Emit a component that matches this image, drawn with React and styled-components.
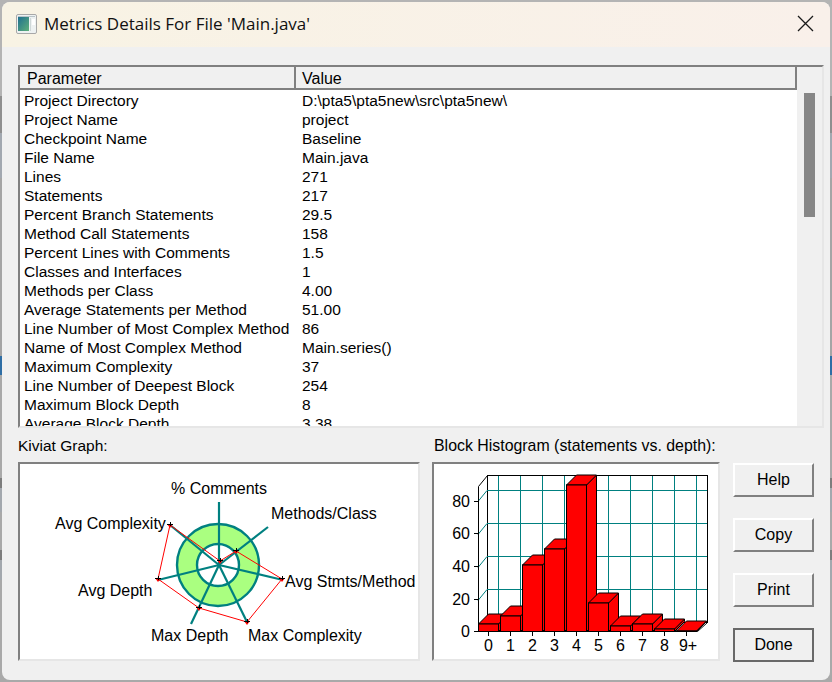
import styled, { createGlobalStyle } from "styled-components";

const rows = [
  ["Project Directory", "D:\\pta5\\pta5new\\src\\pta5new\\"],
  ["Project Name", "project"],
  ["Checkpoint Name", "Baseline"],
  ["File Name", "Main.java"],
  ["Lines", "271"],
  ["Statements", "217"],
  ["Percent Branch Statements", "29.5"],
  ["Method Call Statements", "158"],
  ["Percent Lines with Comments", "1.5"],
  ["Classes and Interfaces", "1"],
  ["Methods per Class", "4.00"],
  ["Average Statements per Method", "51.00"],
  ["Line Number of Most Complex Method", "86"],
  ["Name of Most Complex Method", "Main.series()"],
  ["Maximum Complexity", "37"],
  ["Line Number of Deepest Block", "254"],
  ["Maximum Block Depth", "8"],
  ["Average Block Depth", "3.38"],
];

const center = [219, 565];
const spokes = [
  [219, 502],
  [268, 527],
  [283, 580],
  [247, 622],
  [191, 624],
  [158, 580],
  [170, 525],
];
const kiviatPoints = [
  [220, 561],
  [236, 551],
  [282, 579],
  [247, 622],
  [199, 608],
  [158, 579],
  [170, 525],
];
const kiviatLabels = [
  ["% Comments", 171, 494],
  ["Methods/Class", 271, 519],
  ["Avg Complexity", 55, 529],
  ["Avg Stmts/Method", 285, 587],
  ["Avg Depth", 78, 596],
  ["Max Depth", 151, 641],
  ["Max Complexity", 248, 641],
];

const bars = [624, 616, 565, 549, 485, 603, 626, 624, 629, 631];
const barLabels = ["0", "1", "2", "3", "4", "5", "6", "7", "8", "9+"];
const yTicks = [
  ["80", 501],
  ["60", 533],
  ["40", 566],
  ["20", 599],
  ["0", 631],
];
const backLines = [490, 523, 556, 589];

function KiviatGraph() {
  return (
    <ChartSvg viewBox="20 464 398 195">
      <circle cx="218" cy="565" r="41" fill="#aaff80" stroke="#008080" strokeWidth="2.4" />
      <circle cx="218" cy="565" r="21" fill="#fff" stroke="#008080" strokeWidth="2.4" />
      {spokes.map(([x, y], i) => (
        <line key={i} x1={center[0]} y1={center[1]} x2={x} y2={y} stroke="#008080" strokeWidth="2.2" />
      ))}
      <polygon
        points={kiviatPoints.map((p) => p.join(",")).join(" ")}
        fill="none"
        stroke="#ff0000"
        strokeWidth="1"
      />
      {kiviatPoints.map(([x, y], i) => (
        <g key={i}>
          <polygon points={`${x - 3},${y - 1} ${x + 3},${y - 1} ${x},${y + 3}`} fill="#ff0000" />
          <path d={`M${x - 3} ${y - 0.5}H${x + 3}M${x + 0.5} ${y - 3}V${y + 1}`} stroke="#000" strokeWidth="1" />
        </g>
      ))}
      {kiviatLabels.map(([text, x, y]) => (
        <ChartText key={text} x={x} y={y}>
          {text}
        </ChartText>
      ))}
    </ChartSvg>
  );
}

function BlockHistogram() {
  return (
    <ChartSvg viewBox="434 464 284 195">
      <rect x="487.5" y="475.5" width="220" height="147" fill="#fff" stroke="#000" />
      {backLines.map((y) => (
        <g key={y}>
          <line x1="487" y1={y + 0.5} x2="707" y2={y + 0.5} stroke="#008080" />
          <line x1="478" y1={y + 11.5} x2="487" y2={y + 0.5} stroke="#008080" />
        </g>
      ))}
      {barLabels.map((_, i) => (
        <line key={i} x1={498.5 + i * 22} y1="476" x2={498.5 + i * 22} y2="622" stroke="#008080" />
      ))}
      <path d="M478.5 631.5V486.5L487.5 475.5M478.5 631.5L487.5 622.5M707.5 622.5L697.5 631.5H478.5" fill="none" stroke="#000" />
      {yTicks.map(([label, y]) => (
        <g key={label}>
          <line x1="474" y1={y + 0.5} x2="478" y2={y + 0.5} stroke="#000" />
          <ChartText x="470" y={y + 6} textAnchor="end">
            {label}
          </ChartText>
        </g>
      ))}
      {bars.map((top, i) => {
        const left = 478.5 + i * 22;
        const right = 498.5 + i * 22;
        return (
          <g key={i} stroke="#000" fill="#ff0000">
            <polygon points={`${right},${top} ${right + 10},${top - 10} ${right + 10},621.5 ${right},631.5`} />
            <polygon points={`${left},${top} ${left + 10},${top - 10} ${right + 10},${top - 10} ${right},${top}`} />
            <rect x={left} y={top} width="20" height={631.5 - top} />
            <line x1={left + 10} y1="632" x2={left + 10} y2="636" />
          </g>
        );
      })}
      {barLabels.map((label, i) => (
        <ChartText key={label} x={i === 9 ? 688 : 488.5 + i * 22} y="651" textAnchor="middle">
          {label}
        </ChartText>
      ))}
    </ChartSvg>
  );
}

export default function App() {
  return (
    <>
      <GlobalStyle />
      <Desktop>
        <Dialog>
          <TitleBar>
            <TitleLeft>
              <svg width="21" height="20" viewBox="0 0 21 20">
                <defs>
                  <linearGradient id="appIcon" x1="0" y1="0" x2="1" y2="1">
                    <stop offset="0" stopColor="#1f6f8f" />
                    <stop offset="1" stopColor="#5fb07a" />
                  </linearGradient>
                </defs>
                <rect x="0.5" y="0.5" width="20" height="19" rx="1.5" fill="#eef2f2" stroke="#a8a8a8" />
                <rect x="2" y="3" width="11" height="14" fill="url(#appIcon)" />
                <rect x="2" y="2" width="17" height="1" fill="#b9c4c8" />
                <rect x="14" y="4" width="1" height="13" fill="#cfd8d8" />
                <rect x="16" y="5" width="3" height="6" fill="#fff" />
              </svg>
              <Title>Metrics Details For File 'Main.java'</Title>
            </TitleLeft>
            <svg width="17" height="17" viewBox="0 0 17 17">
              <path d="M1 1L16 16M16 1L1 16" stroke="#1a1a1a" strokeWidth="1.3" fill="none" />
            </svg>
          </TitleBar>
          <Body>
            <ListFrame>
              <ListMain>
                <ListHeader>
                  <HeaderCell $width={276}>Parameter</HeaderCell>
                  <HeaderCell>Value</HeaderCell>
                </ListHeader>
                <ListRows>
                  {rows.map(([name, value]) => (
                    <Row key={name}>
                      <RowName>{name}</RowName>
                      <span>{value}</span>
                    </Row>
                  ))}
                </ListRows>
              </ListMain>
              <ScrollTrack>
                <ScrollThumb />
              </ScrollTrack>
            </ListFrame>
            <BottomRow>
              <ChartColumn $width={402}>
                <ChartLabel $size={15.5}>Kiviat Graph:</ChartLabel>
                <ChartPanel>
                  <KiviatGraph />
                </ChartPanel>
              </ChartColumn>
              <ChartColumn $width={288}>
                <ChartLabel $size={15.9} $inset={2}>Block Histogram (statements vs. depth):</ChartLabel>
                <ChartPanel>
                  <BlockHistogram />
                </ChartPanel>
              </ChartColumn>
              <ButtonColumn>
                <DialogButton>Help</DialogButton>
                <DialogButton>Copy</DialogButton>
                <DialogButton>Print</DialogButton>
                <DialogButton $primary>Done</DialogButton>
              </ButtonColumn>
            </BottomRow>
          </Body>
        </Dialog>
      </Desktop>
    </>
  );
}

const GlobalStyle = createGlobalStyle`
  html, body {
    margin: 0;
    padding: 0;
    width: 832px;
    height: 682px;
    overflow: hidden;
  }
  * {
    box-sizing: border-box;
  }
`;

const Desktop = styled.div`
  width: 832px;
  height: 682px;
  padding: 2px;
  font-family: "Liberation Sans", Arial, sans-serif;
  color: #000;
  background: linear-gradient(
    to bottom,
    #b4b4b4 0 96px,
    #8f8f8f 96px 133px,
    #a2a8b0 133px 178px,
    #a5a5a5 178px 356px,
    #2f6ea5 356px 375px,
    #a9a9a9 375px 478px,
    #7d7d7d 478px 488px,
    #a3a8ae 488px 512px,
    #a9a9a9 512px 550px,
    #7d7d7d 550px 560px,
    #a3a8ae 560px 580px,
    #a9a9a9 580px
  );
`;

const Dialog = styled.div`
  width: 828px;
  height: 678px;
  display: flex;
  flex-direction: column;
  background: #f0f0f0;
  border-radius: 8px;
  overflow: hidden;
`;

const TitleBar = styled.div`
  height: 45px;
  flex: none;
  display: flex;
  align-items: center;
  justify-content: space-between;
  padding: 0 16px 2px 14px;
  background: linear-gradient(to right, #f8f3e4, #f9f0ea);
`;

const TitleLeft = styled.div`
  display: flex;
  align-items: center;
  gap: 7px;
`;

const Title = styled.span`
  font-family: "Open Sans", sans-serif;
  font-size: 17px;
  color: #111;
`;

const Body = styled.div`
  flex: 1;
  padding: 18px 6px 0 16px;
`;

const ListFrame = styled.div`
  height: 363px;
  display: flex;
  overflow: hidden;
  background: #fff;
  border: 2px solid;
  border-color: #808080 #e6e6e6 #e6e6e6 #808080;
`;

const ListMain = styled.div`
  flex: 1;
  min-width: 0;
  display: flex;
  flex-direction: column;
`;

const ListHeader = styled.div`
  height: 23px;
  flex: none;
  display: flex;
  background: #f0f0f0;
  border-bottom: 2px solid #808080;
  border-right: 2px solid #808080;
`;

const HeaderCell = styled.div`
  width: ${(p) => (p.$width ? `${p.$width}px` : "auto")};
  padding-left: ${(p) => (p.$width ? "7px" : "6px")};
  border-right: ${(p) => (p.$width ? "2px solid #808080" : "none")};
  font-size: 16px;
  line-height: 23px;
`;

const ListRows = styled.div`
  padding: 1px 0 0 4px;
`;

const Row = styled.div`
  display: flex;
  height: 19px;
  font-size: 15.5px;
  line-height: 19px;
  white-space: nowrap;
`;

const RowName = styled.span`
  width: 278px;
  flex: none;
`;

const ScrollTrack = styled.div`
  width: 25px;
  flex: none;
  padding: 26px 7px 0 7px;
  background: #f0f0f0;
`;

const ScrollThumb = styled.div`
  width: 11px;
  height: 124px;
  background: #868686;
`;

const BottomRow = styled.div`
  display: flex;
  gap: 12px;
  margin-top: 9px;
`;

const ChartColumn = styled.div`
  width: ${(p) => p.$width}px;
  flex: none;
`;

const ChartLabel = styled.div`
  height: 25px;
  font-size: ${(p) => p.$size}px;
  line-height: 18px;
  padding-left: ${(p) => p.$inset || 0}px;
  white-space: nowrap;
`;

const ChartPanel = styled.div`
  height: 199px;
  background: #fff;
  border: 2px solid;
  border-color: #808080 #e6e6e6 #e6e6e6 #808080;
`;

const ChartSvg = styled.svg`
  display: block;
  width: 100%;
  height: 100%;
`;

const ChartText = styled.text`
  font-family: "Liberation Sans", Arial, sans-serif;
  font-size: 16px;
  fill: #000;
`;

const ButtonColumn = styled.div`
  display: flex;
  flex-direction: column;
  gap: 21px;
  padding-top: 26px;
  margin-left: 1px;
`;

const DialogButton = styled.button`
  width: 81px;
  height: 34px;
  padding: 0;
  background: #f0f0f0;
  font-family: "Liberation Sans", Arial, sans-serif;
  font-size: 16px;
  color: #000;
  border: 2px solid;
  border-color: ${(p) =>
    p.$primary ? "#696969" : "#fff #808080 #808080 #fff"};
`;
